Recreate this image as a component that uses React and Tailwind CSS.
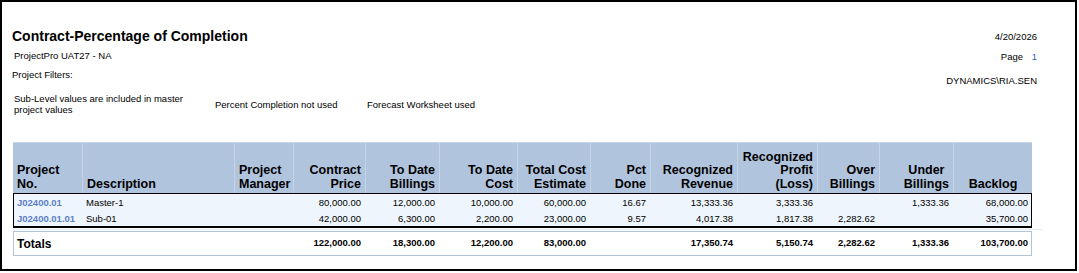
import React from "react";

const cols = [
  { w: "w-[69px]", label: ["Project", "No."], align: "left" },
  { w: "w-[152px]", label: ["Description"], align: "left" },
  { w: "w-[59px]", label: ["Project", "Manager"], align: "left" },
  { w: "w-[72px]", label: ["Contract", "Price"], align: "right" },
  { w: "w-[74px]", label: ["To Date", "Billings"], align: "right" },
  { w: "w-[78px]", label: ["To Date", "Cost"], align: "right" },
  { w: "w-[73px]", label: ["Total Cost", "Estimate"], align: "right" },
  { w: "w-[60px]", label: ["Pct", "Done"], align: "right" },
  { w: "w-[87px]", label: ["Recognized", "Revenue"], align: "right" },
  { w: "w-[80px]", label: ["Recognized", "Profit", "(Loss)"], align: "right" },
  { w: "w-[62px]", label: ["Over", "Billings"], align: "right" },
  { w: "w-[74px]", label: ["Under", "Billings"], align: "rcenter" },
  { w: "w-[79px]", label: ["Backlog"], align: "center" },
];

const rows = [
  ["J02400.01", "Master-1", "", "80,000.00", "12,000.00", "10,000.00", "60,000.00", "16.67", "13,333.36", "3,333.36", "", "1,333.36", "68,000.00"],
  ["J02400.01.01", "Sub-01", "", "42,000.00", "6,300.00", "2,200.00", "23,000.00", "9.57", "4,017.38", "1,817.38", "2,282.62", "", "35,700.00"],
];

const totals = ["", "", "", "122,000.00", "18,300.00", "12,200.00", "83,000.00", "", "17,350.74", "5,150.74", "2,282.62", "1,333.36", "103,700.00"];

const HeaderCell = ({ col, i }) => {
  const justify =
    col.align === "left" ? "justify-start text-left" : col.align === "center" ? "justify-center text-center" : "justify-end text-right";
  return (
    <div
      className={`${col.w} shrink-0 flex items-end px-[4px] pb-[2px] ${justify} ${i > 0 ? "border-l border-[#c6d4e7]" : ""}`}
    >
      <div className={col.align === "rcenter" ? "text-center" : ""}>
        {col.label.map((l) => (
          <div key={l}>{l}</div>
        ))}
      </div>
    </div>
  );
};

const App = () => {
  return (
    <div className="w-[1077px] h-[271px] border-2 border-black bg-white text-black font-['Liberation_Sans',Arial,sans-serif] overflow-hidden">
      {/* top */}
      <div className="flex justify-between">
        <div className="pl-[10px]">
          <h1 className="mt-[26px] text-[14px] leading-[16px] font-bold">Contract-Percentage of Completion</h1>
          <p className="mt-[6px] pl-[2px] text-[9.5px] leading-[11px]">ProjectPro UAT27 - NA</p>
          <p className="mt-[8px] text-[9.5px] leading-[11px]">Project Filters:</p>
          <div className="mt-[13px] flex items-center text-[9.5px] leading-[11px]">
            <div className="pl-[2px] w-[203px]">
              <div className="w-[185px]">Sub-Level values are included in master project values</div>
            </div>
            <div className="w-[152px]">Percent Completion not used</div>
            <div>Forecast Worksheet used</div>
          </div>
        </div>
        <div className="pr-[38px] pt-[29px] text-[9.5px] leading-[11px] text-right">
          <p>4/20/2026</p>
          <p className="mt-[9px]">
            Page<span className="inline-block w-[14px] text-[#1f5fbf]">1</span>
          </p>
          <p className="mt-[13px]">DYNAMICS\RIA.SEN</p>
        </div>
      </div>

      {/* table */}
      <div className="ml-[11px] mt-[27px] w-[1032px]">
        <div className="flex w-[1019px] h-[51px] bg-[#b0c4de] border-t border-[#c6d4e7] text-[12.5px] leading-[13.5px] font-bold">
          {cols.map((c, i) => (
            <HeaderCell key={i} col={c} i={i} />
          ))}
        </div>
        <div className="w-[1019px] border border-black border-b-2 bg-[#eef5fc]">
          {rows.map((r, ri) => (
            <div key={ri} className="flex h-[16px] text-[9.5px] leading-[17px]">
              {r.map((v, i) => (
                <div
                  key={i}
                  className={`${cols[i].w} shrink-0 px-[4px] whitespace-nowrap ${
                    i === 0 ? "-ml-px text-[#5b7fc8] font-semibold" : i < 3 ? "text-left" : "text-right"
                  }`}
                >
                  {v}
                </div>
              ))}
            </div>
          ))}
        </div>
        <div className="mt-[1px] w-[1030px] h-[1px] bg-[#e3ecf7]" />
        <div className="mt-[1px] w-[1019px] h-[25px] flex items-center border border-[#b0c4de] text-[9.5px] font-bold">
          {totals.map((v, i) => (
            <div
              key={i}
              className={`${cols[i].w} shrink-0 px-[4px] whitespace-nowrap ${i === 0 ? "-ml-px text-[12px]" : "text-right"}`}
            >
              {i === 0 ? "Totals" : v}
            </div>
          ))}
        </div>
      </div>
    </div>
  );
};

export default App;
